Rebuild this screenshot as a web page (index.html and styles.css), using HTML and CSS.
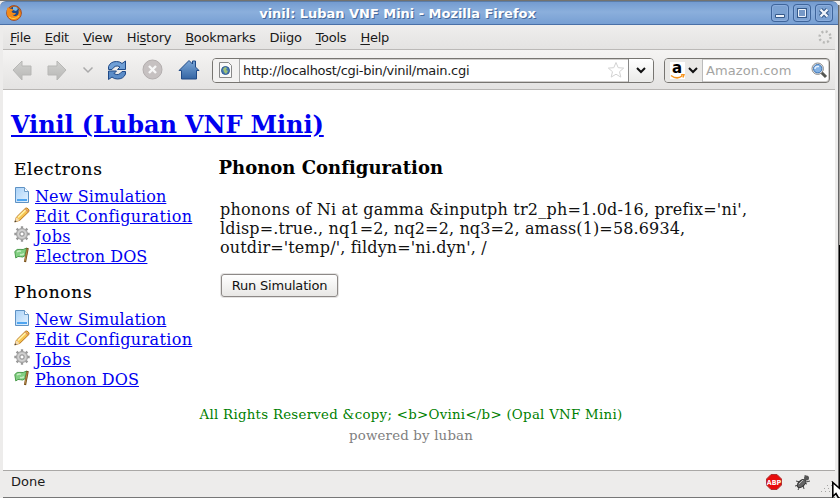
FILE: index.html
```html
<!DOCTYPE html>
<html lang="en">
<head>
<meta charset="utf-8">
<title>vinil: Luban VNF Mini</title>
<link rel="stylesheet" href="styles.css">
</head>
<body>
<svg width="0" height="0" class="defs">
  <defs>
    <linearGradient id="blue" x1="0" y1="0" x2="0" y2="1"><stop offset="0" stop-color="#7ba7d8"/><stop offset="1" stop-color="#3465a4"/></linearGradient>
    <linearGradient id="paper" x1="0" y1="0" x2="1" y2="1"><stop offset="0" stop-color="#a9d2f8"/><stop offset="1" stop-color="#e6f3ff"/></linearGradient>
    <linearGradient id="grey" x1="0" y1="0" x2="0" y2="1"><stop offset="0" stop-color="#d0d0ce"/><stop offset="1" stop-color="#b8b8b6"/></linearGradient>
    <symbol id="page" viewBox="0 0 16 16"><path d="M1.500.500h9l4 4v11h-13z" fill="url(#paper)" stroke="#5f92c4"/><path d="M10.500.500v4h4" fill="#fff" stroke="#6b9bc8"/><path d="M3 13h10" stroke="#4fa5f0" stroke-width="2"/></symbol>
    <symbol id="pencil" viewBox="0 0 16 16"><path d="M.9 14.900l1.500-4.700L11.300 1.400q1.300-.9 2.700.3t1 2.700L5.900 13.300z" fill="#f6c34f" stroke="#b87419"/><path d="M4 10.400l8-7.800" stroke="#fff0a4" stroke-width="1.700"/><path d="M2.300 10.200l3.500 3.100-5.200 1.900z" fill="#f4dcb0"/><path d="M.5 15.300l.7-2 1.400 1.200z" fill="#333"/><path d="M11.400 2.100l2.800 2.800" stroke="#d78b66" stroke-width="1.200"/></symbol>
    <symbol id="gear" viewBox="0 0 16 16"><g stroke="#999" stroke-width="2.300"><path d="M8 .300v15.400M.3 8h15.400M2.600 2.600l10.800 10.800M13.400 2.600L2.600 13.400"/></g><circle cx="8" cy="8" r="5.500" fill="#c2c2c2" stroke="#a2a2a2"/><circle cx="8" cy="8" r="3.800" fill="none" stroke="#d5d5d5"/><circle cx="8" cy="8" r="2.100" fill="#fff" stroke="#909090"/></symbol>
    <symbol id="flag" viewBox="0 0 16 16"><path d="M.8 4.500Q3 1.500 6 2.400T12.600 1l-1.700 7.800q-2 2-4.500.9T1.800 11z" fill="#83cf83" stroke="#4b9c4c"/><path d="M3 5q2-1.400 4-.6M6 7.600q2 .5 4-1" stroke="#c6edc3" stroke-width="1.500" fill="none"/><path d="M13.700 1L11 15" stroke="#765019" stroke-width="2.200"/><path d="M13.300 2l-2.300 12" stroke="#c89956" stroke-width=".8"/></symbol>
  </defs>
</svg>
<div class="window">
  <header class="titlebar">
    <svg class="firefox" width="16" height="16" viewBox="0 0 16 16"><circle cx="8" cy="8" r="7.400" fill="#e57512" stroke="#973b16" stroke-width=".8"/><circle cx="8.400" cy="6.600" r="5.200" fill="#204a87"/><path d="M7 2q4-1 5 2l-2 2-3-1z" fill="#7cb8e6"/><path d="M1 4l1-2 1.500 2Q6 3 7.400 5L5.500 6.500 7 8h3Q9 10.600 6.400 9.600 9 12.600 12 9.800q1-2 .6-5 3 3 1.500 6.500-2 3.700-6 3.800T1.600 11Q.3 8 1 4z" fill="#f48b18"/><path d="M3 12q5 3.500 10-1" stroke="#fcd143" fill="none"/></svg>
    <div class="title">vinil: Luban VNF Mini - Mozilla Firefox</div>
    <div class="controls">
      <svg width="18" height="18"><path d="M4.500 10.500h9v3h-9z" fill="#eef3fa" stroke="#35598a"/></svg>
      <svg width="18" height="18"><path d="M5.500 5.500h7v7h-7z" fill="none" stroke="#35598a" stroke-width="3"/><path d="M5.500 5.500h7v7h-7z" fill="#7699c7" stroke="#edf3fa"/></svg>
      <svg width="18" height="18"><path d="M5.500 5.500l7 7m0-7l-7 7" stroke="#35598a" stroke-width="4.500"/><path d="M5.500 5.500l7 7m0-7l-7 7" stroke="#f2f6fb" stroke-width="2.400"/></svg>
    </div>
  </header>
  <div class="frame">
    <nav class="menubar">
      <span><u>F</u>ile</span><span><u>E</u>dit</span><span><u>V</u>iew</span><span>Hi<u>s</u>tory</span><span><u>B</u>ookmarks</span><span>Diigo</span><span><u>T</u>ools</span><span><u>H</u>elp</span>
      <svg class="throbber" width="14" height="14"><circle cx="7" cy="7" r="5.500" fill="none" stroke="#b8b8b6" stroke-width="2.400" stroke-dasharray="2 2.320"/></svg>
    </nav>
    <div class="toolbar">
      <svg class="nav" width="68" height="36" viewBox="12 52 68 36">
        <path d="M13 70l9-9v5h9v9h-9v5z" fill="url(#grey)" stroke="#b7b7b5"/>
        <path d="M66 70l-9-9v5h-9v9h9v5z" fill="url(#grey)" stroke="#b7b7b5"/>
      </svg>
      <svg class="actions" width="124" height="36" viewBox="80 52 124 36">
        <path d="M83.500 67.500l4.500 4.500 4.500-4.500" fill="none" stroke="#aaa" stroke-width="1.500"/>
        <path d="M108.500 69.500v-3q2-5 8-5 3.500 0 5.500 2l3.500-2.500v8.500h-8l2.500-2.500q-4.500-3-8 2.500z" fill="#6f9fd6" stroke="#204a87"/>
        <path d="M125.500 71.500v2.500q-2 5-8 5-3.500 0-5.500-2l-3.500 2.500v-8.500h8l-2.500 2.500q4.500 3 8-2z" fill="#5b8cc8" stroke="#204a87"/>
        <circle cx="152.500" cy="69.500" r="9.500" fill="#c6c1c1" stroke="#b3aeae"/><path d="M149 66l7 7m0-7l-7 7" stroke="#f7f7f7" stroke-width="2.400"/>
        <path d="M179 70.500l10-10 3.500 3.500v-3h3v6l3.500 3.500h-2.500v8.500h-15v-8.500z" fill="url(#blue)" stroke="#204a87"/>
      </svg>
      <div class="address">
        <div class="site"><svg width="14" height="16"><path d="M.5.500h9l3 3v12h-12z" fill="#fafafa" stroke="#888"/><circle cx="6.500" cy="8.500" r="4" fill="#477bb6" stroke="#315c91"/><path d="M4 7l2-2 2 1-1 2 2 1-2 3-2-2z" fill="#9fc274"/></svg></div>
        <div class="url">http://localhost/cgi-bin/vinil/main.cgi</div>
        <svg class="star" width="18" height="18"><path d="M9 1.500l2.200 5.200 5.500.4-4.200 3.600 1.300 5.400L9 13.200l-4.800 2.900 1.300-5.400L1.300 7.100l5.500-.4z" fill="#fff" stroke="#d2d2d2"/></svg>
        <div class="drop"><svg width="10" height="7"><path d="M1 1l4 4 4-4" fill="none" stroke="#111" stroke-width="2"/></svg></div>
      </div>
      <div class="search">
        <div class="engine"><span class="amazon">a<svg width="15" height="6"><path d="M1 1.500q6 4.500 11 .5M11 1l3-.5-1 3" fill="none" stroke="#f7941d" stroke-width="1.500"/></svg></span><svg width="10" height="7"><path d="M1 1l4 4 4-4" fill="none" stroke="#111" stroke-width="2"/></svg></div>
        <div class="hint">Amazon.com</div>
        <svg class="glass" width="17" height="17"><path d="M10.500 10.500l4.500 4.500" stroke="#555753" stroke-width="3"/><circle cx="6.700" cy="6.700" r="5.700" fill="#eee" stroke="#888"/><circle cx="6.700" cy="6.700" r="4.200" fill="#84b2e4" stroke="#3b73b4"/><path d="M4 7q0-3 4-2.500" stroke="#e5f1ff" stroke-width="1.500" fill="none"/></svg>
      </div>
    </div>
    <main class="page">
      <h1><a href="#">Vinil (Luban VNF Mini)</a></h1>
      <div class="columns">
        <aside>
          <section>
            <h2>Electrons</h2>
            <ul>
              <li><svg><use href="#page"/></svg><a href="#">New Simulation</a></li>
              <li class="edit"><svg><use href="#pencil"/></svg><a href="#">Edit Configuration</a></li>
              <li class="jobs"><svg><use href="#gear"/></svg><a href="#">Jobs</a></li>
              <li><svg><use href="#flag"/></svg><a href="#">Electron DOS</a></li>
            </ul>
          </section>
          <section>
            <h2>Phonons</h2>
            <ul>
              <li><svg><use href="#page"/></svg><a href="#">New Simulation</a></li>
              <li class="edit"><svg><use href="#pencil"/></svg><a href="#">Edit Configuration</a></li>
              <li class="jobs"><svg><use href="#gear"/></svg><a href="#">Jobs</a></li>
              <li><svg><use href="#flag"/></svg><a href="#">Phonon DOS</a></li>
            </ul>
          </section>
        </aside>
        <article>
          <h3>Phonon Configuration</h3>
          <p><span class="first">phonons of Ni at gamma &amp;inputph tr2_ph=1.0d-16, prefix='ni',</span><br>ldisp=.true., nq1=2, nq2=2, nq3=2, amass(1)=58.6934,<br>outdir='temp/', fildyn='ni.dyn', /</p>
          <button>Run Simulation</button>
        </article>
      </div>
      <footer>
        <div class="rights">All Rights Reserved &amp;copy; &lt;b&gt;Ovini&lt;/b&gt; (Opal VNF Mini)</div>
        <div class="powered">powered by luban</div>
      </footer>
    </main>
    <div class="status">
      <span>Done</span>
      <svg class="tray" width="75" height="26" viewBox="765 471 75 26">
        <path d="M771 474.500h6l4.500 4.500v6l-4.500 4.500h-6l-4.500-4.500v-6z" fill="#e80c0c" stroke="#a33"/>
        <text x="774" y="485" class="abp">ABP</text>
        <g stroke="#444" fill="none"><path d="M796 481l4 1m-5 4l4-1m-1 5l2-4m4 3l-1-4m4-1l-3-1m1-8l1 4m4 2l-4 1"/></g>
        <ellipse cx="801.500" cy="483.500" rx="5" ry="3" transform="rotate(-42 801.500 483.500)" fill="#666" stroke="#333"/><circle cx="806.500" cy="478" r="2.500" fill="#555"/><path d="M799 484l4-4" stroke="#bbb"/>
        <g fill="#a5a5a3"><path d="M831 481h1v1h-1zM827 485h1v1h-1zM831 485h1v1h-1zM824 488h1v1h-1zM828 488h1v1h-1zM821 491h1v1h-1zM825 491h1v1h-1zM829 491h1v1h-1z"/></g>
      </svg>
    </div>
  </div>
  <div class="edge"></div>
  <svg class="cursor" width="8" height="17"><path d="M.8 1.500v14l3.200-3 2.500 4.500h4V10z" fill="#fff" stroke="#000" stroke-width="1.600"/></svg>
</div>
</body>
</html>
```
FILE: styles.css
```css
* { box-sizing: border-box; }
body { margin: 0; font: 13px "DejaVu Sans", sans-serif; color: #1a1a1a; overflow: hidden; }
svg { display: block; flex: none; }
.defs { position: absolute; }
.window { width: 840px; height: 498px; background: #edeceb; position: relative; border-top: 1px solid #73726e; }
.titlebar { height: 24px; display: flex; align-items: center; padding: 0 6px; border-top: 1px solid #5b7da9; border-bottom: 1px solid #4a70a7; border-radius: 6px 6px 0 0; background: linear-gradient(#739bd0, #8bafdc 45%, #779fd3); width: 838px; }
.title { flex: 1; text-align: center; font-weight: bold; color: #fff; text-shadow: 1px 1px #46699a; padding-left: 2px; letter-spacing: -.03px; }
.controls { display: flex; gap: 4px; margin-right: -1px; }
.controls svg { border-radius: 4px; box-shadow: inset 0 0 0 1px #3e659b, inset 0 0 0 2px #8caede; background: #7ca2d2; }
.frame { margin: 0 5px 0 3px; height: 473px; display: flex; flex-direction: column; border-bottom: 1px solid #777; }
.menubar { height: 25px; flex: none; display: flex; align-items: center; gap: 14px; padding: 0 3px 0 7px; background: linear-gradient(#efeeed, #e4e3e2); border-bottom: 1px solid #bbb9b7; letter-spacing: -.26px; }
.menubar u { text-underline-offset: 2px; }
.throbber { margin-left: auto; }
.toolbar { height: 40px; flex: none; display: flex; align-items: center; background: linear-gradient(#f5f4f3, #e4e3e2); border-bottom: 1px solid #b8b6b4; padding-left: 9px; }
.actions { margin-right: 8px; }
.address, .search { height: 25px; margin-top: 1px; display: flex; align-items: center; border: 1px solid #777571; border-radius: 4px; background: #fff; box-shadow: inset 0 0 0 1px #d0cecc; overflow: hidden; flex: none; }
.address { width: 442px; }
.site, .drop, .engine { height: 23px; display: flex; align-items: center; justify-content: center; background: #f3f2f1; }
.site { width: 27px; border-right: 1px solid #aaa; }
.url { flex: 1; padding-left: 3px; letter-spacing: -.29px; }
.drop { width: 25px; margin-left: 3px; border-left: 1px solid #888; background: linear-gradient(#fff, #eaeae8); }
.search { width: 166px; margin-left: 10px; }
.engine { width: 38px; gap: 3px; background: #e9e8e6; border-right: 1px solid #bbb; }
.amazon { width: 15px; height: 17px; background: #fff; font: bold 15px/12px "DejaVu Sans", sans-serif; text-align: center; color: #000; }
.hint { flex: 1; padding-left: 3px; color: #a4a4a2; letter-spacing: .1px; }
.glass { margin-right: 1px; }
.page { flex: 1; min-height: 0; background: #fff; font: 16px/20px "DejaVu Serif", serif; padding: 21px 0 0 8px; color: #000; }
.page a { color: #0000f0; }
h1, h2, h3, p, ul { margin: 0; padding: 0; }
h1 { font-size: 24px; line-height: 28px; letter-spacing: -.09px; }
.columns { display: flex; height: 265px; padding: 20px 0 0 3px; }
aside { width: 205px; }
section { height: 123px; }
h2 { font-size: 17px; letter-spacing: .7px; font-weight: normal; line-height: 20px; margin-bottom: 8px; -webkit-text-stroke: .15px #000; }
ul { list-style: none; }
li { height: 20px; display: flex; letter-spacing: .1px; }
li svg { width: 16px; height: 16px; margin-right: 5px; }
.edit { letter-spacing: .35px; }
.jobs { letter-spacing: .35px; }
.jobs svg { margin-top: -1px; }
h3 { font-size: 18px; line-height: 20px; letter-spacing: .02px; margin: -1px 0 0 -.5px; }
p { line-height: 19px; padding: 22px 0 0 1px; letter-spacing: .14px; color: #111; }
.first { letter-spacing: .21px; }
button { display: block; font: 13px "DejaVu Sans", sans-serif; letter-spacing: -.2px; width: 117px; height: 23px; margin: 17px 0 0 2px; padding: 0; color: #111; background: linear-gradient(#fff, #e8e7e5); border: 1px solid #8d8987; border-radius: 3px; box-shadow: 0 0 0 1px #e5e4e3; }
footer { width: 800px; text-align: center; font-size: 13.333px; line-height: 21px; letter-spacing: .28px; }
.rights { color: #008000; }
.powered { color: #808080; letter-spacing: .18px; }
.status { height: 27px; flex: none; display: flex; justify-content: space-between; border-top: 1px solid #aaa8a6; padding: 3px 0 0 8px; }
.tray { margin: -3px -5px 0 0; }
.abp { font: bold 7px "DejaVu Sans Condensed", "DejaVu Sans", sans-serif; fill: #fff; text-anchor: middle; }
.edge { position: absolute; top: 4px; right: 0; bottom: 0; width: 2px; border-left: 1px solid #666; background: linear-gradient(#a5a3a0 240px, #000 240px); }
.cursor { position: absolute; right: 0; bottom: 0; }
```
